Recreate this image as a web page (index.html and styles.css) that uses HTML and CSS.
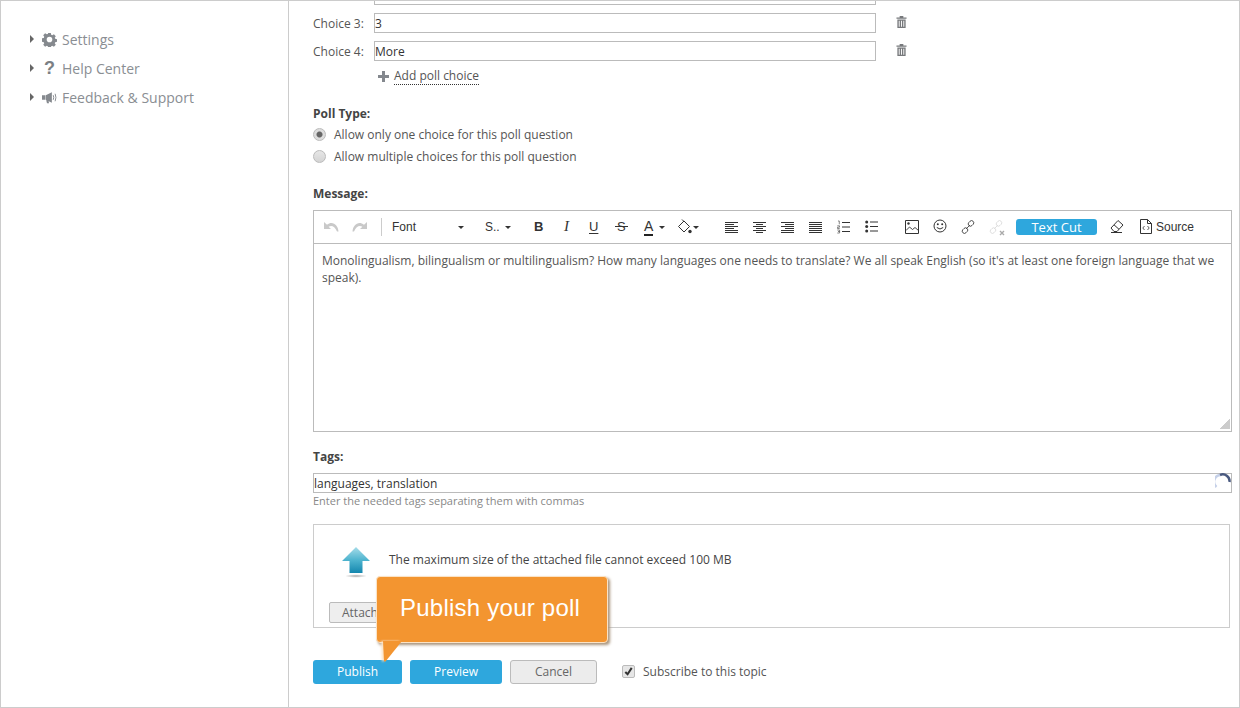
FILE: index.html
```html
<!DOCTYPE html>
<html lang="en">
<head>
<meta charset="utf-8">
<title>New poll</title>
<link rel="stylesheet" href="styles.css">
</head>
<body>
<div class="window">
  <aside class="sidebar">
    <ul class="nav">
      <li class="nav-item"><span class="caret"></span>
        <svg class="nav-icon" viewBox="0 0 16 16"><path fill="#85898e" fill-rule="evenodd" d="M6.600 1h2.800l.4 2 1.100.5 1.800-1.100 2 2-1.100 1.700.5 1.200 2 .4v2.700l-2 .4-.5 1.200 1.100 1.700-2 2-1.800-1.100-1.100.5-.4 2H6.600l-.4-2-1.100-.5-1.800 1.100-2-2 1.100-1.700-.5-1.200-2-.4V6.700l2-.4.5-1.200-1.100-1.700 2-2 1.800 1.100 1.100-.5zM8 5a3 3 0 1 0 0 6 3 3 0 0 0 0-6z"/></svg>
        <span>Settings</span></li>
      <li class="nav-item"><span class="caret"></span>
        <span class="nav-icon nav-q">?</span>
        <span>Help Center</span></li>
      <li class="nav-item"><span class="caret"></span>
        <svg class="nav-icon" viewBox="0 0 16 16"><path fill="#85898e" d="M0 5.500h3.500v5H0zM4 5.500 10.500 2.500v11L4 10.500zM4.500 11h2.300l.7 3H5.300z"/><path fill="none" stroke="#85898e" d="M12 5.500q1 2.500 0 5M14 4q1.700 4 0 8"/></svg>
        <span>Feedback &amp; Support</span></li>
    </ul>
  </aside>
  <main class="main">
    <div class="input-cut"></div>
    <div class="choice">
      <label class="choice-label">Choice 3:</label>
      <div class="input">3</div>
      <svg class="trash" viewBox="0 0 12 13"><path fill="#77797c" d="M4 0h4v1.500h3.500V3H.5V1.500H4zM1.500 3.700h9V13h-9zM3 5v6.800h1V5zm2.500 0v6.800h1V5zM8 5v6.800h1V5z"/></svg>
    </div>
    <div class="choice">
      <label class="choice-label">Choice 4:</label>
      <div class="input">More</div>
      <svg class="trash" viewBox="0 0 12 13"><path fill="#77797c" d="M4 0h4v1.500h3.500V3H.5V1.500H4zM1.500 3.700h9V13h-9zM3 5v6.800h1V5zm2.500 0v6.800h1V5zM8 5v6.800h1V5z"/></svg>
    </div>
    <div class="add-choice">
      <svg class="plus" viewBox="0 0 11 11"><path fill="#84888e" d="M4 0h3v4h4v3H7v4H4V7H0V4h4z"/></svg>
      <span class="add-link">Add poll choice</span>
    </div>

    <h3 class="label label-poll">Poll Type:</h3>
    <div class="radio-row"><span class="radio radio-on"></span>Allow only one choice for this poll question</div>
    <div class="radio-row"><span class="radio"></span>Allow multiple choices for this poll question</div>

    <h3 class="label label-message">Message:</h3>
    <section class="editor">
      <div class="toolbar">
        <svg class="ti ti-undo" viewBox="0 0 15 10"><path fill="#c9c9c9" d="M0 0v7h7L4.600 4.800C7 3 10.500 3.500 13 9.500h1.500C14 3 8.500-1.500 3 2.800z"/></svg>
        <svg class="ti ti-redo" viewBox="0 0 15 10"><path fill="#c9c9c9" d="M15 0v7H8l2.400-2.200C8 3 4.500 3.500 2 9.500H.5C1 3 6.500-1.500 12 2.800z"/></svg>
        <span class="tb-sep"></span>
        <span class="tb-font">Font</span><span class="arrow arrow-font"></span>
        <span class="tb-size">S..</span><span class="arrow arrow-size"></span>
        <span class="tb-b">B</span>
        <span class="tb-i">I</span>
        <span class="tb-u">U</span>
        <span class="tb-s">S</span>
        <span class="tb-a">A</span><span class="arrow arrow-a"></span>
        <svg class="ti ti-fill" viewBox="0 0 16 16"><path fill="none" stroke="#333" d="M7 2 12.500 7.500 7 13 1.500 7.500z"/><path fill="none" stroke="#333" d="M5 .5l2 2"/><circle cx="13" cy="12.500" r="1.700" fill="#333"/></svg>
        <span class="arrow arrow-fill"></span>
        <svg class="ti ti-al" viewBox="0 0 14 14"><path stroke="#333" d="M0 1.500h13M0 3.500h9M0 5.500h13M0 7.500h9M0 9.500h13M0 11.500h13"/></svg>
        <svg class="ti ti-ac" viewBox="0 0 14 14"><path stroke="#333" d="M0 1.500h13M3 3.500h7M0 5.500h13M3 7.500h7M0 9.500h13M3 11.500h7"/></svg>
        <svg class="ti ti-ar" viewBox="0 0 14 14"><path stroke="#333" d="M0 1.500h13M4 3.500h9M0 5.500h13M4 7.500h9M0 9.500h13M0 11.500h13"/></svg>
        <svg class="ti ti-aj" viewBox="0 0 14 14"><path stroke="#333" d="M0 1.500h13M0 3.500h13M0 5.500h13M0 7.500h13M0 9.500h13M0 11.500h13"/></svg>
        <svg class="ti ti-ol" viewBox="0 0 14 14"><path stroke="#333" d="M5 2.500h8M5 7h8M5 11.500h8"/><path fill="none" stroke="#555" stroke-width=".7" d="M1 1h1.300v3.300M.3 5.800h2.200v1.400H.5v1.300h2.200M.3 10h2.300v1.500H1.300 2.600V13H.3"/></svg>
        <svg class="ti ti-ul" viewBox="0 0 14 14"><path stroke="#333" d="M5 2h8M5 6.500h8M5 11h8"/><circle cx="1.700" cy="2" r="1.500" fill="#333"/><circle cx="1.700" cy="6.500" r="1.500" fill="#333"/><circle cx="1.700" cy="11" r="1.500" fill="#333"/></svg>
        <svg class="ti ti-img" viewBox="0 0 14 14"><path fill="none" stroke="#333" d="M.5.500h13v13H.5z"/><path fill="none" stroke="#333" stroke-width=".9" d="M1 10.500 4.500 7l3 2.500L10 7.500l3.500 3"/><circle cx="3.500" cy="3.500" r="1.200" fill="#333"/></svg>
        <svg class="ti ti-smile" viewBox="0 0 14 14"><circle cx="7" cy="7" r="6" fill="none" stroke="#333"/><circle cx="4.800" cy="5.300" r="1" fill="#333"/><circle cx="9.200" cy="5.300" r="1" fill="#333"/><path fill="none" stroke="#333" d="M3.800 8.500q3.200 3 6.400 0"/></svg>
        <svg class="ti ti-link" viewBox="0 0 14 14"><g fill="none" stroke="#444" stroke-width=".9"><rect x="7" y="1.200" width="6" height="4.400" rx="2.200" transform="rotate(-45 10 3.400)"/><rect x="1" y="8.400" width="6" height="4.400" rx="2.200" transform="rotate(-45 4 10.600)"/><path d="M5 9l4-4"/></g></svg>
        <svg class="ti ti-unlink" viewBox="0 0 16 16"><g fill="none" stroke="#dcdcdc" stroke-width=".9"><rect x="7" y="1.200" width="6" height="4.400" rx="2.200" transform="rotate(-45 10 3.400)"/><rect x="1" y="8.400" width="6" height="4.400" rx="2.200" transform="rotate(-45 4 10.600)"/><path d="M5 9l4-4"/></g><path stroke="#aaa" stroke-width="1.400" d="M11 11l4 4M15 11l-4 4"/></svg>
        <span class="tb-cut">Text Cut</span>
        <svg class="ti ti-eraser" viewBox="0 0 14 14"><path fill="none" stroke="#333" d="M1 9 8 1.500l5 4.500-6 6.500H4z"/><path fill="none" stroke="#333" d="M4 5.800 9 10.300M1 13.500h11"/></svg>
        <svg class="ti ti-source" viewBox="0 0 12 15"><path fill="none" stroke="#333" d="M.5.500h7l4 4v10H.5zM7.500.500v4h4"/><path fill="none" stroke="#333" stroke-width=".8" d="M4.500 7 2.800 9l1.700 2M7.500 7l1.700 2-1.700 2"/></svg>
        <span class="tb-source">Source</span>
      </div>
      <div class="editor-body">Monolingualism, bilingualism or multilingualism? How many languages one needs to translate? We all speak English (so it's at least one foreign language that we speak).<span class="grip"></span></div>
    </section>

    <h3 class="label label-tags">Tags:</h3>
    <div class="tags-input">languages, translation
      <svg class="spinner" viewBox="0 0 16 16"><path fill="none" stroke="#c5d0e8" stroke-width="2.500" d="M1.500 14A6.800 6.800 0 0 1 5 2"/><path fill="none" stroke="#4a5a80" stroke-width="2.500" d="M5 2A6.800 6.800 0 0 1 14.500 9"/></svg>
    </div>
    <p class="hint">Enter the needed tags separating them with commas</p>

    <section class="attach">
      <div class="attach-top">
        <svg class="upload" viewBox="0 0 30 32">
          <defs>
            <linearGradient id="upg" x1="0" y1="0" x2="0" y2="1"><stop offset="0" stop-color="#a6dce9"/><stop offset=".5" stop-color="#4fb4cf"/><stop offset="1" stop-color="#1487ae"/></linearGradient>
            <radialGradient id="ups"><stop offset="0" stop-color="#aaa"/><stop offset="1" stop-color="#fff"/></radialGradient>
          </defs>
          <path fill="url(#upg)" d="M15 1 29 15H21.500V27H8.500V15H1z"/>
          <ellipse cx="15" cy="30" rx="11" ry="1.800" fill="url(#ups)"/>
        </svg>
        <span>The maximum size of the attached file cannot exceed 100 MB</span>
      </div>
      <button class="attach-btn" type="button">Attach</button>
    </section>

    <div class="actions">
      <button class="btn btn-primary btn-publish" type="button">Publish</button>
      <button class="btn btn-primary btn-preview" type="button">Preview</button>
      <button class="btn btn-cancel" type="button">Cancel</button>
      <label class="subscribe"><span class="check"><svg viewBox="0 0 12 12"><path fill="none" stroke="#333" stroke-width="2.200" d="M2.500 6.500 5 9l4.500-7"/></svg></span>Subscribe to this topic</label>
    </div>

    <div class="callout">Publish your poll
      <svg class="callout-tail" viewBox="0 0 20 21"><path fill="#f39530" d="M0 0H19L2.500 20.500H1z"/></svg>
    </div>
  </main>
</div>
</body>
</html>
```
FILE: styles.css
```css
* { box-sizing: border-box; }
html, body { margin: 0; padding: 0; }
body {
  width: 1240px;
  height: 708px;
  overflow: hidden;
  background: #fff;
  font-family: "Open Sans", sans-serif;
  font-size: 12px;
  color: #444;
}
.window {
  display: flex;
  width: 1240px;
  height: 708px;
  border: 1px solid #ccc;
}
.sidebar {
  flex: 0 0 288px;
  border-right: 1px solid #ccc;
  padding-top: 24px;
}
.nav { list-style: none; margin: 0; padding: 0 0 0 29px; }
.nav-item {
  display: flex;
  align-items: center;
  height: 29px;
  font-size: 14px;
  color: #8a8e93;
}
.caret {
  width: 0;
  height: 0;
  margin-top: -2px;
  border-left: 4px solid #666;
  border-top: 4px solid transparent;
  border-bottom: 4px solid transparent;
}
.nav-icon {
  flex: none;
  width: 15px;
  height: 15px;
  margin: 0 5px 0 8px;
}
.nav-q {
  font-family: "Liberation Sans", sans-serif;
  font-weight: 700;
  font-size: 18px;
  line-height: 15px;
  text-align: center;
  color: #7b7f84;
}
.main {
  position: relative;
  flex: 1;
  padding-left: 24px;
}
.input-cut {
  width: 502px;
  height: 4px;
  margin-left: 61px;
  border: 1px solid #bbb;
  border-top: 0;
}
.choice {
  display: flex;
  align-items: center;
  height: 20px;
  margin-top: 8px;
}
.choice-label { width: 61px; color: #555; }
.input {
  width: 502px;
  height: 20px;
  border: 1px solid #bbb;
  line-height: 20px;
  color: #333;
}
.trash { width: 11px; height: 12px; margin: -2px 0 0 20px; }
.add-choice {
  display: flex;
  align-items: center;
  height: 16px;
  margin: 7px 0 0 65px;
}
.plus { width: 11px; height: 11px; margin-right: 5px; }
.add-link { color: #555; border-bottom: 1px dotted #333; line-height: 16px; height: 17px; }
.label { margin: 0; font-size: 12px; font-weight: 700; color: #444; line-height: 16px; }
.label-poll { margin: 22px 0 1px; }
.radio-row { display: flex; align-items: center; height: 22px; color: #555; }
.radio {
  width: 13px;
  height: 13px;
  margin-right: 8px;
  border: 1px solid #bbb;
  border-radius: 50%;
  background: linear-gradient(#e6e6e6, #d4d4d4);
}
.radio-on { background: radial-gradient(circle, #666 0 2.500px, #ddd 3.500px); }
.label-message { margin-top: 19px; }
.editor {
  width: 919px;
  height: 222px;
  margin-top: 8px;
  border: 1px solid #bbb;
}
.toolbar {
  position: relative;
  height: 33px;
  border-bottom: 1px solid #bbb;
  font-family: "Liberation Sans", sans-serif;
  color: #333;
}
.ti, .arrow, .toolbar > span { position: absolute; }
.ti { width: 14px; height: 14px; top: 9px; }
.ti-undo { left: 10px; top: 11px; width: 15px; height: 10px; }
.ti-redo { left: 38px; top: 11px; width: 15px; height: 10px; }
.tb-sep { left: 67px; top: 7px; width: 1px; height: 18px; background: #ccc; }
.tb-font { left: 78px; top: 9px; }
.arrow { width: 0; height: 0; border-left: 3px solid transparent; border-right: 3px solid transparent; border-top: 3px solid #333; }
.arrow-font { left: 144px; top: 15px; }
.tb-size { left: 171px; top: 9px; }
.arrow-size { left: 191px; top: 15px; }
.tb-b { left: 220px; top: 8px; font-weight: 700; font-size: 13px; }
.tb-i { left: 250px; top: 7px; font-family: "Liberation Serif", serif; font-style: italic; font-size: 15px; }
.tb-u { left: 275px; top: 8px; font-size: 13px; text-decoration: underline; text-underline-offset: 2px; }
.tb-s { left: 303px; top: 8px; font-size: 13px; }
.tb-s::after {
  content: "";
  position: absolute;
  left: -2px;
  right: -2px;
  top: 7px;
  height: 1px;
  background: #333;
}
.tb-a { left: 330px; top: 7px; font-size: 14px; line-height: 16px; border-bottom: 2px solid #222; }
.arrow-a { left: 345px; top: 15px; }
.ti-fill { left: 363px; top: 8px; width: 16px; height: 16px; }
.arrow-fill { left: 379px; top: 15px; }
.ti-al { left: 411px; top: 10px; }
.ti-ac { left: 439px; top: 10px; }
.ti-ar { left: 467px; top: 10px; }
.ti-aj { left: 495px; top: 10px; }
.ti-ol { left: 523px; top: 9px; }
.ti-ul { left: 551px; top: 9px; }
.ti-img { left: 591px; top: 9px; }
.ti-smile { left: 619px; top: 8px; }
.ti-link { left: 647px; top: 9px; }
.ti-unlink { left: 675px; top: 9px; width: 16px; height: 16px; }
.tb-cut {
  left: 702px;
  top: 8px;
  width: 81px;
  height: 16px;
  border-radius: 3px;
  background: #2ea7dd;
  color: #fff;
  font-family: "Open Sans", sans-serif;
  font-size: 13px;
  line-height: 17px;
  text-align: center;
}
.ti-eraser { left: 796px; top: 8px; }
.ti-source { left: 826px; top: 8px; width: 12px; height: 15px; }
.tb-source { left: 842px; top: 9px; }
.editor-body {
  position: relative;
  height: 187px;
  padding: 8px 8px;
  line-height: 17px;
  color: #555;
}
.grip {
  position: absolute;
  right: 1px;
  bottom: 2px;
  width: 10px;
  height: 10px;
  background: linear-gradient(135deg, transparent 50%, #ccc 50%);
}
.label-tags { margin-top: 17px; }
.tags-input {
  position: relative;
  width: 919px;
  height: 20px;
  margin-top: 8px;
  border: 1px solid #bbb;
  line-height: 20px;
  color: #333;
}
.spinner {
  position: absolute;
  right: 0;
  top: -1px;
  width: 16px;
  height: 16px;
}
.hint { margin: 0; height: 16px; font-size: 11px; line-height: 16px; color: #888; }
.attach {
  width: 917px;
  height: 104px;
  margin-top: 15px;
  padding: 0 15px;
  border: 1px solid #ccc;
}
.attach-top {
  display: flex;
  align-items: center;
  height: 42px;
  margin-top: 13px;
  color: #444;
}
.upload { width: 30px; height: 32px; margin: 6px 18px 0 12px; }
.attach-btn {
  display: block;
  width: 70px;
  height: 21px;
  margin-top: 22px;
  padding: 0 0 0 12px;
  border: 1px solid #bbb;
  border-radius: 2px;
  background: #eee;
  color: #666;
  font: 12px "Open Sans", sans-serif;
  text-align: left;
}
.actions {
  display: flex;
  align-items: center;
  height: 24px;
  margin-top: 32px;
}
.btn {
  height: 24px;
  padding: 0 0 2px;
  border-radius: 3px;
  font: 12px "Open Sans", sans-serif;
}
.btn-primary { border: 0; background: #2ea7dd; color: #fff; }
.btn-publish { width: 89px; }
.btn-preview { width: 92px; margin-left: 8px; }
.btn-cancel { width: 87px; margin-left: 8px; border: 1px solid #bbb; background: #ececec; color: #666; }
.subscribe { display: flex; align-items: center; margin-left: 25px; padding-bottom: 2px; color: #555; }
.check {
  width: 13px;
  height: 13px;
  margin: 1px 8px 0 0;
  border: 1px solid #bbb;
  border-radius: 2px;
  background: #e6e6e6;
}
.check svg { display: block; width: 11px; height: 11px; }
.callout {
  position: absolute;
  left: 87px;
  top: 575px;
  width: 232px;
  height: 67px;
  padding-left: 23px;
  border: 1px solid #fbe3c6;
  border-radius: 4px;
  background: #f39530;
  box-shadow: 2px 2px 3px #a8947c;
  color: #fff;
  font-family: "Liberation Sans", sans-serif;
  font-size: 24px;
  letter-spacing: .24px;
  line-height: 62px;
}
.callout-tail {
  position: absolute;
  left: 6px;
  top: 64px;
  width: 20px;
  height: 21px;
  filter: drop-shadow(-2px 0 1px #fbe3c6);
}
```
